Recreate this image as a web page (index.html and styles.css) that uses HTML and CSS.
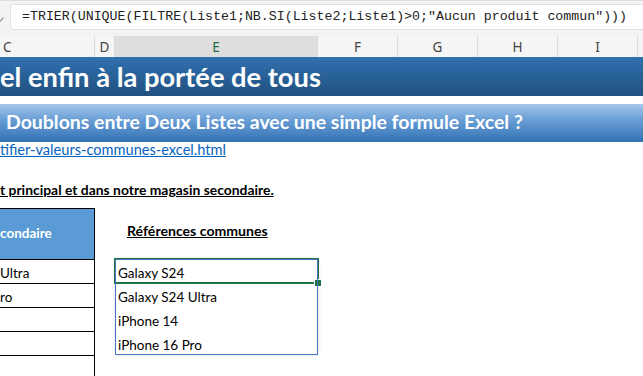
FILE: index.html
```html
<!DOCTYPE html>
<html lang="fr">
<head>
<meta charset="utf-8">
<title>Excel – valeurs communes</title>
<link rel="stylesheet" href="styles.css">
</head>
<body>
<div class="app">
  <div class="formula-bar">
    <svg class="fx-chevron" width="4" height="10" viewBox="0 0 4 10"><path d="M0 7.5 L3.5 3.5" fill="none" stroke="#777" stroke-width="1.1"/></svg>
    <div class="formula-input">=TRIER(UNIQUE(FILTRE(Liste1;NB.SI(Liste2;Liste1)&gt;0;"Aucun produit commun")))</div>
  </div>

  <div class="col-headers">
    <div class="ch ch-c">C</div>
    <div class="ch">D</div>
    <div class="ch ch-active">E</div>
    <div class="ch">F</div>
    <div class="ch">G</div>
    <div class="ch">H</div>
    <div class="ch">I</div>
    <div class="ch ch-last"></div>
  </div>

  <div class="sheet">
    <div class="banner banner-main">el enfin à la portée de tous</div>
    <div class="banner banner-sub">Doublons entre Deux Listes avec une simple formule Excel ?</div>
    <div class="link-cell"><a href="#">tifier-valeurs-communes-excel.html</a></div>
    <div class="note-cell">t principal et dans notre magasin secondaire.</div>

    <div class="tbl-head">condaire</div>
    <div class="res-title">Références communes</div>

    <div class="tbl-cell row-a">Ultra</div>
    <div class="tbl-cell row-b">ro</div>
    <div class="tbl-cell row-c"></div>
    <div class="tbl-cell row-d"></div>
    <div class="tbl-cell row-e"></div>

    <div class="spill">
      <div class="spill-cell">Galaxy S24</div>
      <div class="spill-cell">Galaxy S24 Ultra</div>
      <div class="spill-cell">iPhone 14</div>
      <div class="spill-cell">iPhone 16 Pro</div>
      <div class="active-cell"><span class="fill-handle"></span></div>
    </div>
  </div>
</div>
</body>
</html>
```

FILE: styles.css
```css
* { box-sizing: border-box; }

body {
  margin: 0;
  background: #fff;
}

.app {
  width: 643px;
  height: 376px;
  overflow: hidden;
  font-family: Lato, "Liberation Sans", sans-serif;
  color: #000;
}

/* ---------- formula bar ---------- */
.formula-bar {
  height: 36px;
  background: #f3f3f3;
  border-top: 1px solid #dcdcdc;
  padding-top: 3px;
  display: flex;
  align-items: flex-start;
}

.fx-chevron {
  margin-top: 10px;
  flex: none;
}

.formula-input {
  margin-left: 6px;
  flex: 1;
  height: 26px;
  background: #fff;
  border: 1px solid #e2e2e2;
  border-right: none;
  border-radius: 4px 0 0 4px;
  padding-left: 11px;
  font-family: "Liberation Mono", monospace;
  font-size: 13.27px;
  line-height: 24px;
  color: #222;
  white-space: nowrap;
  overflow: hidden;
}

/* ---------- column headers ---------- */
.col-headers {
  display: grid;
  grid-template-columns: 95px 20px 203px 80px 80px 80px 80px 5px;
  height: 21px;
  background: #f5f5f5;
}

.ch {
  border-right: 1px solid #dadada;
  font-family: "Noto Sans", sans-serif;
  font-size: 13.5px;
  line-height: 20px;
  padding-top: 1px;
  color: #444;
  text-align: center;
}

.ch-c {
  text-align: left;
  padding-left: 3px;
}

.ch-active {
  background: #dedede;
  color: #1e6e42;
  border-bottom: 2px solid #217346;
}

.ch-last { border-right: none; }

/* ---------- sheet ---------- */
.sheet {
  display: grid;
  grid-template-columns: 95px 20px 203px 80px 80px 80px 80px 5px;
  grid-template-rows: 39px 8px 38px 19px 17px 24px 6px 51px 24px 24px 24px 24px 24px;
  font-size: 13.5px;
  line-height: 16px;
}

.banner {
  grid-column: 1 / -1;
  color: #fff;
  font-weight: 700;
  line-height: 1.2;
  white-space: nowrap;
  overflow: hidden;
}

.banner-main {
  grid-row: 1;
  font-size: 27.3px;
  padding-top: 4.3px;
  background: linear-gradient(#3071b0, #21507f);
}

.banner-sub {
  grid-row: 3;
  font-size: 19.45px;
  padding-top: 5.8px;
  padding-left: 6px;
  background: linear-gradient(#a6c8eb 0%, #6b9fd6 40%, #3372b4 100%);
}

.link-cell {
  grid-row: 4;
  grid-column: 1 / 5;
  font-size: 14.6px;
  padding-top: 0;
  white-space: nowrap;
}

.link-cell a {
  color: #0563c1;
  text-decoration: underline;
}

.note-cell {
  grid-row: 6;
  grid-column: 1 / 5;
  font-size: 13.9px;
  padding-top: 3.6px;
  font-weight: 700;
  text-decoration: underline;
  white-space: nowrap;
}

.tbl-head {
  grid-row: 8;
  grid-column: 1;
  background: #5b9bd5;
  border-top: 1px solid #000;
  border-right: 1px solid #000;
  color: #fff;
  font-weight: 700;
  padding-top: 15.8px;
  white-space: nowrap;
}

.res-title {
  grid-row: 8;
  grid-column: 3;
  font-size: 14.1px;
  padding-top: 15.2px;
  padding-left: 12px;
  font-weight: 700;
  text-decoration: underline;
  white-space: nowrap;
}

.tbl-cell {
  grid-column: 1;
  border-top: 1px solid #000;
  border-right: 1px solid #000;
  padding-top: 5px;
  white-space: nowrap;
}

.row-a { grid-row: 9; }
.row-b { grid-row: 10; }
.row-c { grid-row: 11; }
.row-d { grid-row: 12; }
.row-e { grid-row: 13; }

/* spilled dynamic array range */
.spill {
  grid-row: 9 / span 4;
  grid-column: 3;
  position: relative;
  display: flex;
  flex-direction: column;
  box-shadow: 0 0 5px rgba(0, 0, 0, 0.12);
}

.spill::after {
  content: "";
  position: absolute;
  inset: 0;
  border: 1px solid #4a72c4;
  pointer-events: none;
}

.spill-cell {
  height: 24px;
  padding-top: 6px;
  padding-left: 3px;
  white-space: nowrap;
}

.active-cell {
  position: absolute;
  top: -1px;
  left: -1px;
  right: -1px;
  height: 26px;
  border: 2px solid #217346;
}

.fill-handle {
  position: absolute;
  right: -4px;
  bottom: -4px;
  width: 6px;
  height: 6px;
  background: #217346;
  outline: 1px solid #fff;
}
```
